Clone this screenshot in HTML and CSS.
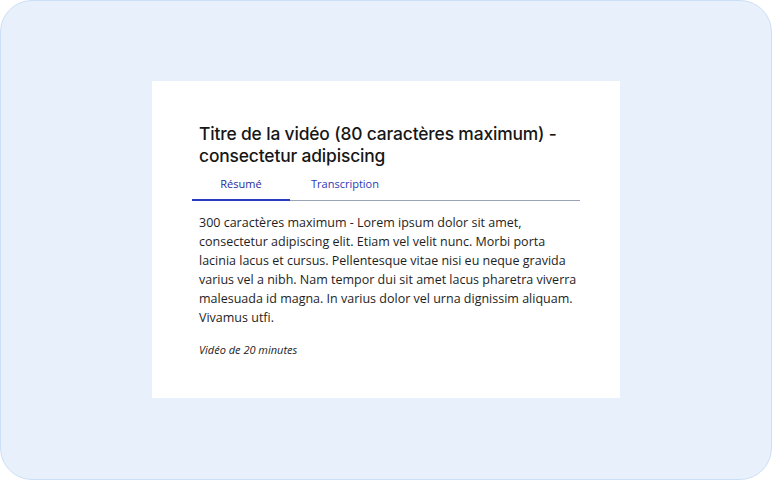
FILE: index.html
```html
<!DOCTYPE html>
<html lang="fr">
<head>
<meta charset="utf-8">
<link rel="stylesheet" href="styles.css">
</head>
<body>
<div class="frame">
  <div class="card">
    <h1 class="title">Titre de la vidéo (80 caractères maximum) - consectetur adipiscing</h1>
    <div class="tabs">
      <div class="tab active">Résumé</div>
      <div class="tab second">Transcription</div>
    </div>
    <p class="desc">300 caractères maximum - Lorem ipsum dolor sit amet, consectetur adipiscing elit. Etiam vel velit nunc. Morbi porta lacinia lacus et cursus. Pellentesque vitae nisi eu neque gravida varius vel a nibh. Nam tempor dui sit amet lacus pharetra viverra malesuada id magna. In varius dolor vel urna dignissim aliquam. Vivamus utfi.</p>
    <p class="duration">Vidéo de 20 minutes</p>
  </div>
</div>
</body>
</html>
```

FILE: styles.css
```css
* { box-sizing: border-box; }
html, body { margin: 0; padding: 0; background: #ffffff; }
.frame {
  width: 772px;
  height: 480px;
  background: #e8f0fc;
  border: 1px solid #cddff6;
  border-radius: 32px;
  display: flex;
  align-items: center;
  justify-content: center;
}
.card {
  width: 468px;
  height: 317px;
  background: #ffffff;
  padding: 42px 40px 0 40px;
  margin-top: -2px;
}
.title {
  margin: 0;
  padding: 0 7px;
  font-family: Inter, "Liberation Sans", sans-serif;
  font-weight: 500;
  font-size: 17.4px;
  line-height: 22px;
  color: #161616;
  letter-spacing: -0.15px;
}
.tabs {
  display: flex;
  margin-top: 5px;
  border-bottom: 1px solid #9aa3b3;
}
.tab {
  font-family: "Open Sans", sans-serif;
  font-size: 11px;
  line-height: 16px;
  padding: 4px 0 8px;
  color: #2b3bb5;
}
.tab.active {
  width: 98px;
  text-align: center;
  color: #1f2a9c;
  box-shadow: inset 0 -2px 0 #2a3bc2;
  margin-bottom: -1px;
  padding-bottom: 9px;
}
.tab.second {
  padding-left: 21px;
}
.desc {
  margin: 12px 0 0;
  padding: 0 0 0 7px;
  font-family: "Open Sans", sans-serif;
  font-size: 12.5px;
  line-height: 19px;
  color: #1e1e1e;
}
.duration {
  margin: 15px 0 0;
  padding: 0 7px;
  font-family: "Open Sans", sans-serif;
  font-style: italic;
  font-size: 11px;
  line-height: 16px;
  color: #222;
}
```
